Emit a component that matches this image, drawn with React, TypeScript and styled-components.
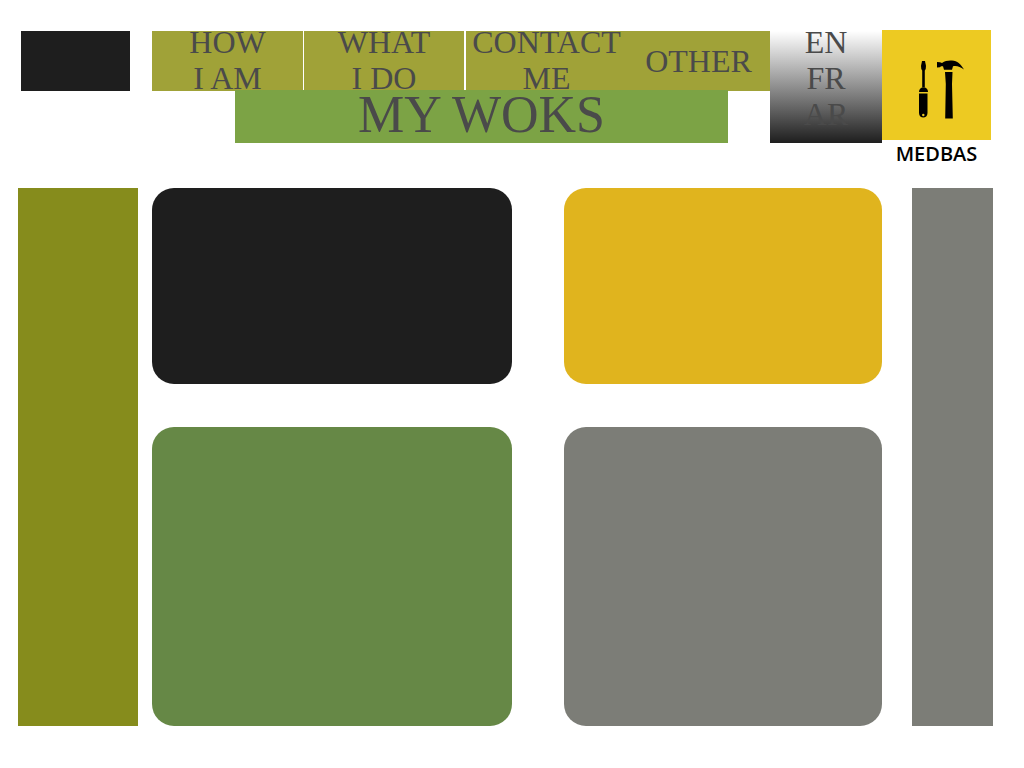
import React from "react";
import styled, { createGlobalStyle } from "styled-components";

const GlobalStyle = createGlobalStyle`
  * { box-sizing: border-box; }
  body {
    margin: 0;
    background: #fff;
    color: #4a4a4a;
    font-family: "Liberation Serif", serif;
  }
`;

const Page = styled.div`
  padding: 30px 0 42px;
`;

const Header = styled.header`
  display: grid;
  grid-template-columns: 109fr 22fr 618fr 112fr 109fr;
  align-items: start;
  height: 158px;
  padding: 0 33px 0 21px;
`;

const Block = styled.div`
  height: 60px;
  margin-top: 1px;
  background: #1e1e1e;
`;

const Center = styled.div`
  grid-column: 3;
  margin-top: 1px;
`;

const Nav = styled.nav`
  display: flex;
  height: 60px;
  background: #a0a238;
`;

const NavLink = styled.a<{ $share: number; $divider?: number; $stacked?: boolean }>`
  flex: ${(p) => p.$share} 1 0;
  min-width: 0;
  display: flex;
  align-items: center;
  justify-content: center;
  padding-bottom: ${(p) => (p.$stacked ? 2 : 0)}px;
  border-right: ${(p) => p.$divider ?? 0}px solid #fff;
  color: inherit;
  font-size: 32px;
  line-height: 36px;
  text-align: center;
  text-decoration: none;
  white-space: pre-line;
`;

const Title = styled.h1`
  position: relative;
  height: 53px;
  margin: -1px 42px 0 83px;
  background: #7ca345;
  font-size: 52px;
  font-weight: 400;
  line-height: 50px;
  text-align: center;
`;

const Languages = styled.nav`
  display: flex;
  flex-direction: column;
  align-items: center;
  justify-content: center;
  height: 112px;
  margin-top: 1px;
  padding-bottom: 18px;
  background: linear-gradient(#fff, #1e1e1e);
`;

const Language = styled.a`
  flex: none;
  color: inherit;
  font-size: 32px;
  line-height: 36px;
  text-decoration: none;
`;

const Brand = styled.a`
  display: block;
  color: #000;
  font-family: "Open Sans", "Liberation Sans", sans-serif;
  font-size: 20px;
  font-weight: 600;
  line-height: 28px;
  text-align: center;
  text-decoration: none;
`;

const Emblem = styled.svg`
  display: block;
  width: 100%;
  height: 110px;
  background: #edca22;
`;

const Main = styled.main`
  display: grid;
  grid-template-columns: 120fr 14fr 730fr 30fr 81fr;
  padding: 0 31px 0 18px;
`;

const Side = styled.aside<{ $color: string }>`
  background: ${(p) => p.$color};
`;

const Works = styled.section`
  grid-column: 3;
  display: grid;
  grid-template-columns: 360fr 318fr;
  grid-template-rows: 196px 299px;
  gap: 43px 52px;
`;

const Card = styled.article<{ $color: string }>`
  border-radius: 22px;
  background: ${(p) => p.$color};
`;

const RightSide = styled(Side)`
  grid-column: 5;
`;

export default function App() {
  return (
    <Page>
      <GlobalStyle />
      <Header>
        <Block />
        <Center>
          <Nav aria-label="Main">
            <NavLink href="#who" $share={151} $divider={1} $stacked>{"HOW\nI AM"}</NavLink>
            <NavLink href="#what" $share={160} $divider={2} $stacked>{"WHAT\nI DO"}</NavLink>
            <NavLink href="#contact" $share={161} $stacked>{"CONTACT\nME"}</NavLink>
            <NavLink href="#other" $share={143}>OTHER</NavLink>
          </Nav>
          <Title>MY WOKS</Title>
        </Center>
        <Languages aria-label="Language">
          <Language href="#en">EN</Language>
          <Language href="#fr">FR</Language>
          <Language href="#ar">AR</Language>
        </Languages>
        <Brand href="#home">
          <Emblem viewBox="0 0 109 110" aria-hidden="true">
            <path d="M40 31h3l1 5-.3 3-1.200 2h-2l-1.200-2-.3-3z" />
            <path d="M40.200 40.500h2.600v17h-2.600z" />
            <path d="M37 62c0-2 1-4 3-4.500h3c2 .5 3 2.500 3 4.500z" />
            <path d="M37 63.500h8.500V83c0 6-8.500 6-8.500 0z" />
            <circle cx="41.300" cy="85" r="1.200" fill="#edca22" />
            <path d="M55 32l3 .3 2 .8c3-2.200 6-2.700 10-2.500 5.500.2 8.500 3.500 12 9-4-2.800-7-4-11-3.300l-1 3.500h-8l-1-3.500h-2l-1 1-3 .3z" />
            <path d="M63 42h7.500l-.5 12 .8 34.500h-7.600l.6-34.500z" />
          </Emblem>
          MEDBAS
        </Brand>
      </Header>
      <Main>
        <Side $color="#868c1c" />
        <Works aria-label="My works">
          <Card $color="#1e1e1e" />
          <Card $color="#e0b41e" />
          <Card $color="#668846" />
          <Card $color="#7c7d77" />
        </Works>
        <RightSide $color="#7c7d77" />
      </Main>
    </Page>
  );
}
